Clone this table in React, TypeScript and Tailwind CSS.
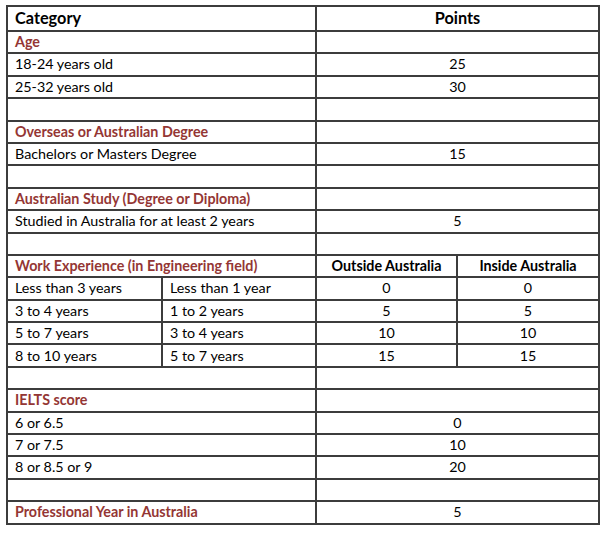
const red = "text-[#943634] font-bold"

type Row = { a?: string; pts?: string; kind?: "head" | "blank" | "plain" }

const top: Row[] = [
  { a: "Age", kind: "head" },
  { a: "18-24 years old", pts: "25" },
  { a: "25-32 years old", pts: "30" },
  { kind: "blank" },
  { a: "Overseas or Australian Degree", kind: "head" },
  { a: "Bachelors or Masters Degree", pts: "15" },
  { kind: "blank" },
  { a: "Australian Study (Degree or Diploma)", kind: "head" },
  { a: "Studied in Australia for at least 2 years", pts: "5" },
  { kind: "blank" },
]

const work = [
  ["Less than 3 years", "Less than 1 year", "0", "0"],
  ["3 to 4 years", "1 to 2 years", "5", "5"],
  ["5 to 7 years", "3 to 4 years", "10", "10"],
  ["8 to 10 years", "5 to 7 years", "15", "15"],
]

const bottom: Row[] = [
  { kind: "blank" },
  { a: "IELTS score", kind: "head" },
  { a: "6 or 6.5", pts: "0" },
  { a: "7 or 7.5", pts: "10" },
  { a: "8 or 8.5 or 9", pts: "20" },
  { kind: "blank" },
  { a: "Professional Year in Australia", pts: "5", kind: "head" },
]

const cell = "border-2 border-[#3c3c3c] px-[7px] py-0 leading-none whitespace-nowrap"

function SimpleRow({ r }: { r: Row }) {
  return (
    <tr className="h-[22.4px]">
      <td colSpan={2} className={`${cell} text-left ${r.kind === "head" ? red : ""}`}>{r.a}</td>
      <td colSpan={2} className={`${cell} text-center`}>{r.pts}</td>
    </tr>
  )
}

export default function App() {
  return (
    <div className="w-[602px] h-[533px] bg-white pt-[5px] pl-[6px] text-[14.3px] text-black" style={{ fontFamily: "Lato, 'Noto Sans', sans-serif" }}>
      <table className="table-fixed border-collapse w-[592px]">
        <colgroup>
          <col className="w-[155px]" />
          <col className="w-[154px]" />
          <col className="w-[141px]" />
          <col className="w-[142px]" />
        </colgroup>
        <tbody>
          <tr className="h-[25px]">
            <td colSpan={2} className={`${cell} text-left font-bold text-[16.3px]`}>Category</td>
            <td colSpan={2} className={`${cell} text-center font-bold text-[16.3px]`}>Points</td>
          </tr>
          {top.map((r, i) => <SimpleRow key={i} r={r} />)}
          <tr className="h-[22.4px]">
            <td colSpan={2} className={`${cell} text-left ${red}`}>Work Experience (in Engineering field)</td>
            <td className={`${cell} text-center font-bold`}>Outside Australia</td>
            <td className={`${cell} text-center font-bold`}>Inside Australia</td>
          </tr>
          {work.map((w, i) => (
            <tr key={i} className="h-[22.4px]">
              <td className={`${cell} text-left`}>{w[0]}</td>
              <td className={`${cell} text-left`}>{w[1]}</td>
              <td className={`${cell} text-center`}>{w[2]}</td>
              <td className={`${cell} text-center`}>{w[3]}</td>
            </tr>
          ))}
          {bottom.map((r, i) => <SimpleRow key={i} r={r} />)}
        </tbody>
      </table>
    </div>
  )
}
